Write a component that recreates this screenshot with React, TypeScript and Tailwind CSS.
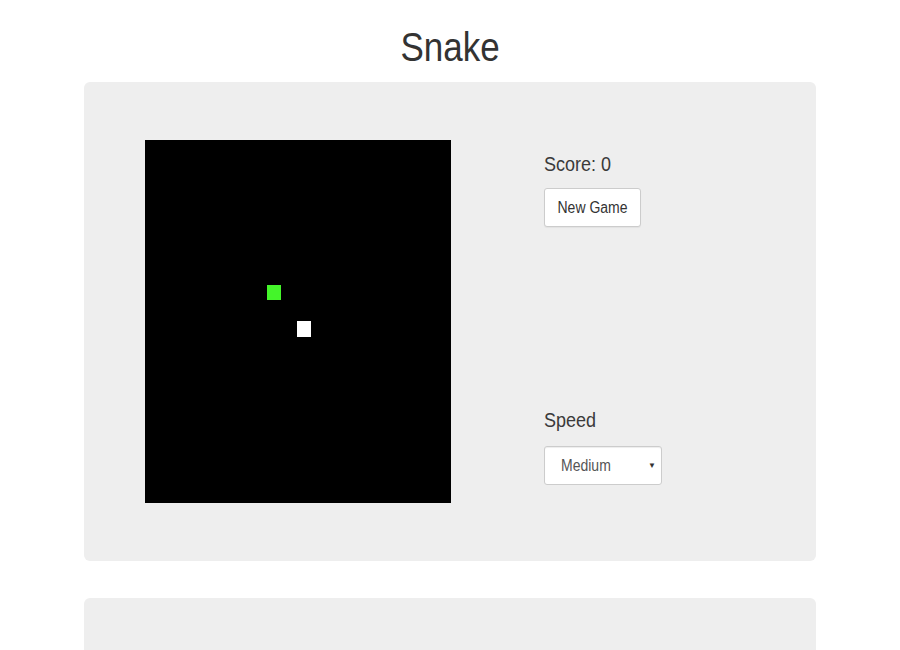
import { useState } from 'react';

export default function App() {
  const [score] = useState(0);
  const [speed, setSpeed] = useState('medium');

  return (
    <div className="min-h-[650px] bg-white pt-[26px] font-['Liberation_Sans',Arial,sans-serif] text-[#333]">
      <h1 className="mb-[14px] text-center text-[35px] leading-[42px] font-normal">
        <span className="inline-block scale-y-[1.16]">Snake</span>
      </h1>

      {/* Game panel */}
      <div className="mx-auto w-[732px] rounded-[6px] bg-[#eeeeee] px-[61px] py-[58px]">
        <div className="flex">
          {/* Board */}
          <div className="relative h-[363px] w-[306px] shrink-0 bg-black">
            <div className="absolute left-[122px] top-[145px] h-[15px] w-[14px] bg-[#44f52a]" />
            <div className="absolute left-[152px] top-[181px] h-[16px] w-[14px] bg-white" />
          </div>

          {/* Controls */}
          <div className="ml-[93px] mt-[11px] flex flex-col items-start">
            <div className="text-[18px] leading-[26px] text-[#3a3a3a]">
              <span className="inline-block scale-y-[1.16]">Score: {score}</span>
            </div>
            <button
              type="button"
              className="mt-[11px] h-[39px] w-[97px] rounded-[3px] border border-[#cccccc] bg-white text-[14px] text-[#333] shadow-[0_1px_1px_rgba(0,0,0,0.05)]"
            >
              <span className="inline-block scale-y-[1.16]">New Game</span>
            </button>

            <div className="mt-[180px] text-[18px] leading-[26px] text-[#3a3a3a]">
              <span className="inline-block scale-y-[1.16]">Speed</span>
            </div>
            <div className="relative mt-[13px] h-[39px] w-[118px]">
              <select
                value={speed}
                onChange={(e) => setSpeed(e.target.value)}
                className="h-[39px] w-[118px] appearance-none rounded-[3px] border border-[#cccccc] bg-white pl-[16px] text-[14px] text-transparent shadow-[inset_0_1px_1px_rgba(0,0,0,0.075)] outline-none"
              >
                <option value="slow">Slow</option>
                <option value="medium">Medium</option>
                <option value="fast">Fast</option>
              </select>
              <span className="pointer-events-none absolute left-[17px] top-0 flex h-[39px] items-center text-[14px] text-[#555]">
                <span className="inline-block scale-y-[1.16]">
                  {speed === 'slow' ? 'Slow' : speed === 'fast' ? 'Fast' : 'Medium'}
                </span>
              </span>
              <span className="pointer-events-none absolute right-[6px] top-[14px] text-[8px] text-[#333]">▼</span>
            </div>
          </div>
        </div>
      </div>

      {/* Second panel */}
      <div className="mx-auto mt-[37px] h-[80px] w-[732px] rounded-t-[6px] bg-[#eeeeee]" />
    </div>
  );
}
